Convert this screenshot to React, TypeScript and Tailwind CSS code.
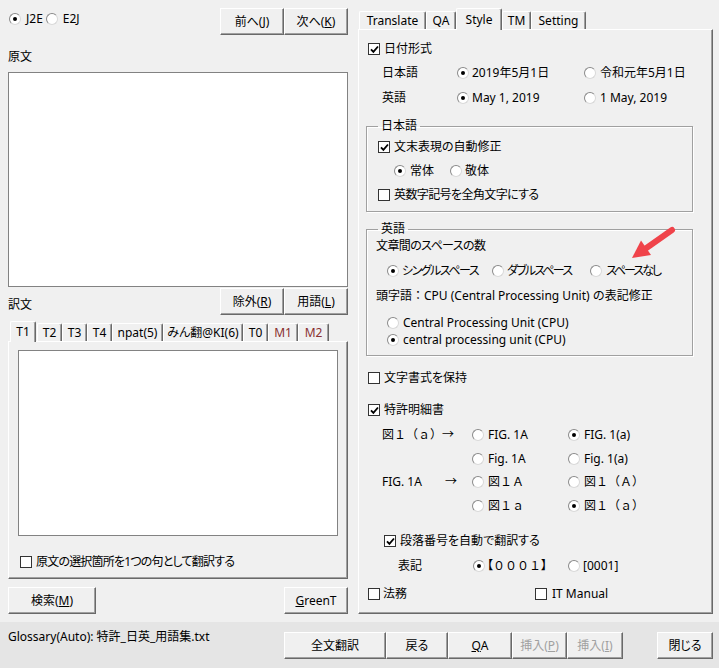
import React from "react";

const btnBase =
    "flex items-center justify-center h-[27px] bg-[#f0f0f0] border border-t-white border-l-white border-r-[#696969] border-b-[#696969] shadow-[inset_-1px_-1px_0_#a0a0a0] leading-none shrink-0";

const Button: React.FC<{className: string; disabled?: boolean; children: React.ReactNode}> = ({className, disabled, children}) => (
    <div className={`${btnBase} ${disabled ? "text-[#a0a0a0]" : ""} ${className}`}>{children}</div>
);

const CheckBox: React.FC<{checked?: boolean; className?: string}> = ({checked, className = ""}) => (
    <span className={`flex items-center justify-center w-[12px] h-[12px] shrink-0 bg-white border border-[#333333] ${className}`}>
        {checked && (
            <svg width="9" height="9" viewBox="0 0 9 9">
                <path d="M1 4.3 L3.4 6.9 L8 1.5" fill="none" stroke="#000" strokeWidth="1.8"/>
            </svg>
        )}
    </span>
);

const Radio: React.FC<{checked?: boolean; className?: string}> = ({checked, className = ""}) => (
    <span className={`flex items-center justify-center w-[12px] h-[12px] shrink-0 rounded-full bg-white border border-t-[#8a8a8a] border-l-[#8a8a8a] border-r-[#d8d8d8] border-b-[#d8d8d8] ${className}`}>
        {checked && <span className="w-[4px] h-[4px] rounded-full bg-black"/>}
    </span>
);

const Row: React.FC<{className?: string; children: React.ReactNode}> = ({className = "", children}) => (
    <div className={`flex items-center h-[18px] whitespace-nowrap ${className}`}>{children}</div>
);

const Tab: React.FC<{className: string; active?: boolean; children: React.ReactNode}> = ({className, active, children}) => (
    <div
        className={`flex items-center justify-center bg-[#f0f0f0] border-t border-l border-r border-t-white border-l-white border-r-[#696969] shadow-[inset_-1px_0_0_#a0a0a0] rounded-t-[2px] whitespace-nowrap ${active ? "relative z-10" : "mb-px"} ${className}`}
    >
        {children}
    </div>
);

const panelBorder =
    "bg-[#f0f0f0] border border-t-white border-l-white border-r-[#696969] border-b-[#696969] shadow-[inset_-1px_-1px_0_#a0a0a0]";

const groupBox = "m-0 p-0 border border-[#a0a0a0] shadow-[1px_1px_0_#fff,inset_1px_1px_0_#fff]";

const LeftPane = () => (
    <div className="flex flex-col w-[358px] pl-[8px] pr-[10px] shrink-0">
        {/* direction + prev/next */}
        <div className="flex justify-between h-[27px] mt-[8px]">
            <div className="flex items-center h-[18px] mt-[2px] pl-[1px]">
                <Radio checked/>
                <span className="ml-[5px]">J2E</span>
                <Radio className="ml-[3px]"/>
                <span className="ml-[5px]">E2J</span>
            </div>
            <div className="flex">
                <Button className="w-[64px]">前へ(<u>J</u>)</Button>
                <Button className="w-[64px]">次へ(<u>K</u>)</Button>
            </div>
        </div>

        <Row className="mt-[13px]">原文</Row>
        <div className="mt-[6px] h-[215px] w-[340px] bg-white border border-[#828282]"/>

        <div className="flex justify-between h-[27px] mt-[1px]">
            <Row className="self-end mb-[1px]">訳文</Row>
            <div className="flex">
                <Button className="w-[64px]">除外(<u>R</u>)</Button>
                <Button className="w-[64px]">用語(<u>L</u>)</Button>
            </div>
        </div>

        {/* result tabs */}
        <div className="flex items-end h-[21px] mt-[6px] pl-[2px]">
            <Tab active className="w-[26px] h-[21px]">T1</Tab>
            <Tab className="w-[25px] h-[18px] ml-px">T2</Tab>
            <Tab className="w-[25px] h-[18px]">T3</Tab>
            <Tab className="w-[25px] h-[18px]">T4</Tab>
            <Tab className="w-[51px] h-[18px]">npat(5)</Tab>
            <Tab className="w-[80px] h-[18px]">みん翻@KI(6)</Tab>
            <Tab className="w-[25px] h-[18px]">T0</Tab>
            <Tab className="w-[30px] h-[18px] text-[#8a3030]">M1</Tab>
            <Tab className="w-[31px] h-[18px] text-[#8a3030]">M2</Tab>
        </div>
        <div className={`-mt-px h-[238px] w-[340px] pl-[9px] ${panelBorder}`}>
            <div className="mt-[8px] h-[186px] w-[320px] bg-white border border-[#828282]"/>
            <Row className="mt-[17px] pl-[2px]">
                <CheckBox/>
                <span className="ml-[4px] tracking-[-0.8px]">原文の選択箇所を1つの句として翻訳する</span>
            </Row>
        </div>

        <div className="flex justify-between mt-[8px]">
            <Button className="w-[88px]">検索(<u>M</u>)</Button>
            <Button className="w-[64px]"><u>G</u>reenT</Button>
        </div>
    </div>
);

const RightPane = () => (
    <div className="flex flex-col w-[355px] shrink-0">
        <div className="flex items-end h-[22px] mt-[8px] pl-[1px]">
            <Tab className="w-[67px] h-[18px]">Translate</Tab>
            <Tab className="w-[30px] h-[18px]">QA</Tab>
            <Tab active className="w-[46px] h-[22px]">Style</Tab>
            <Tab className="w-[29px] h-[18px]">TM</Tab>
            <Tab className="w-[55px] h-[18px]">Setting</Tab>
        </div>
        <div className={`-mt-px h-[585px] w-[355px] ${panelBorder}`}>
            {/* date format */}
            <Row className="mt-[10px] pl-[9px]">
                <CheckBox checked/>
                <span className="ml-[4px]">日付形式</span>
            </Row>
            <Row className="mt-[6px] pl-[23px]">
                <span className="w-[75px]">日本語</span>
                <Radio checked/>
                <span className="ml-[3px] w-[112px]">2019年5月1日</span>
                <Radio/>
                <span className="ml-[4px]">令和元年5月1日</span>
            </Row>
            <Row className="mt-[7px] pl-[23px]">
                <span className="w-[75px]">英語</span>
                <Radio checked/>
                <span className="ml-[3px] w-[112px]">May 1, 2019</span>
                <Radio/>
                <span className="ml-[4px]">1 May, 2019</span>
            </Row>

            {/* Japanese group */}
            <fieldset className={`mt-[11px] ml-[7px] w-[327px] pb-[7px] ${groupBox}`}>
                <legend className="ml-[11px] px-[3px] leading-[16px]">日本語</legend>
                <Row className="mt-[4px] pl-[11px]">
                    <CheckBox checked/>
                    <span className="ml-[4px]">文末表現の自動修正</span>
                </Row>
                <Row className="mt-[6px] pl-[27px]">
                    <Radio checked/>
                    <span className="ml-[4px] w-[24px]">常体</span>
                    <Radio className="ml-[16px]"/>
                    <span className="ml-[3px]">敬体</span>
                </Row>
                <Row className="mt-[6px] pl-[11px]">
                    <CheckBox/>
                    <span className="ml-[4px] tracking-[-0.6px]">英数字記号を全角文字にする</span>
                </Row>
            </fieldset>

            {/* English group */}
            <fieldset className={`mt-[9px] ml-[7px] w-[327px] pb-[6px] ${groupBox}`}>
                <legend className="ml-[11px] px-[3px] leading-[16px]">英語</legend>
                <Row className="pl-[9px] tracking-[-0.6px]">文章間のスペースの数</Row>
                <Row className="mt-[7px] pl-[20px]">
                    <Radio checked/>
                    <span className="ml-[3px] w-[90px] tracking-[-1.5px]">シングルスペース</span>
                    <Radio/>
                    <span className="ml-[3px] w-[83px] tracking-[-1.8px]">ダブルスペース</span>
                    <Radio/>
                    <span className="ml-[4px] tracking-[-2px]">スペースなし</span>
                </Row>
                <Row className="mt-[7px] pl-[9px] [font-feature-settings:normal]">
                    頭字語：CPU (Central Processing Unit) の表記修正
                </Row>
                <div className="flex items-start h-[17px] mt-[9px] pl-[20px] whitespace-nowrap">
                    <Radio className="mt-[3px]"/>
                    <span className="ml-[4px] h-[16px] leading-[18px] overflow-hidden">Central Processing Unit (CPU)</span>
                </div>
                <Row className="pl-[20px]">
                    <Radio checked/>
                    <span className="ml-[4px]">central processing unit (CPU)</span>
                </Row>
            </fieldset>

            <Row className="mt-[13px] pl-[9px]">
                <CheckBox/>
                <span className="ml-[4px]">文字書式を保持</span>
            </Row>

            {/* patent */}
            <Row className="mt-[14px] pl-[9px]">
                <CheckBox checked/>
                <span className="ml-[4px]">特許明細書</span>
            </Row>
            <Row className="mt-[7px] pl-[23px] [font-feature-settings:normal]">
                <span className="w-[90px]">図１（ａ）→</span>
                <Radio/>
                <span className="ml-[4px] w-[80px]">FIG. 1A</span>
                <Radio checked/>
                <span className="ml-[4px]">FIG. 1(a)</span>
            </Row>
            <Row className="mt-[6px] pl-[113px]">
                <Radio/>
                <span className="ml-[4px] w-[80px]">Fig. 1A</span>
                <Radio/>
                <span className="ml-[4px]">Fig. 1(a)</span>
            </Row>
            <Row className="mt-[5px] pl-[23px] [font-feature-settings:normal]">
                <span className="w-[63px]">FIG. 1A</span>
                <span className="w-[27px]">→</span>
                <Radio/>
                <span className="ml-[4px] w-[80px]">図１Ａ</span>
                <Radio/>
                <span className="ml-[4px]">図１（Ａ）</span>
            </Row>
            <Row className="mt-[6px] pl-[113px] [font-feature-settings:normal]">
                <Radio/>
                <span className="ml-[4px] w-[80px]">図１ａ</span>
                <Radio checked/>
                <span className="ml-[4px]">図１（ａ）</span>
            </Row>

            <Row className="mt-[17px] pl-[25px]">
                <CheckBox checked/>
                <span className="ml-[4px]">段落番号を自動で翻訳する</span>
            </Row>
            <Row className="mt-[7px] pl-[39px]">
                <span className="w-[75px]">表記</span>
                <Radio checked/>
                <span className="ml-[2px] w-[81px] flex">
                    <span>【</span>
                    <span className="[font-feature-settings:normal]">０００１</span>
                    <span>】</span>
                </span>
                <Radio/>
                <span className="ml-[3px]">[0001]</span>
            </Row>

            <Row className="mt-[10px] pl-[9px]">
                <CheckBox/>
                <span className="ml-[3px] w-[152px]">法務</span>
                <CheckBox/>
                <span className="ml-[5px]">IT Manual</span>
            </Row>
        </div>
    </div>
);

const BottomBar = () => (
    <div className="flex h-[46px] bg-[#e5e5e5] whitespace-nowrap">
        <div className="w-[284px] pl-[8px] mt-[6px] h-[18px] flex items-center shrink-0">
            Glossary(Auto): 特許_日英_用語集.txt
        </div>
        <div className="flex mt-[10px]">
            <Button className="w-[102px]">全文翻訳</Button>
            <Button className="w-[62px]">戻る</Button>
            <Button className="w-[64px]"><u>Q</u>A</Button>
            <Button disabled className="w-[55px]">挿入(<u>P</u>)</Button>
            <Button disabled className="w-[56px]">挿入(<u>I</u>)</Button>
            <Button className="w-[56px] ml-[34px]">閉じる</Button>
        </div>
    </div>
);

export default function App() {
    return (
        <div className="relative w-[719px] h-[668px] overflow-hidden bg-[#f0f0f0] text-black text-[12px] leading-[18px] font-['Noto_Sans','Noto_Sans_CJK_JP',sans-serif] [font-feature-settings:'palt']">
            <div className="flex h-[622px]">
                <LeftPane/>
                <RightPane/>
            </div>
            <BottomBar/>

            {/* red annotation arrow */}
            <svg className="absolute left-[624px] top-[221px]" width="54" height="42" viewBox="0 0 54 42">
                <line x1="48" y1="9" x2="21" y2="28" stroke="#f0434a" strokeWidth="6" strokeLinecap="round"/>
                <polygon points="8,37 27,34 17,19.5" fill="#f0434a"/>
            </svg>
        </div>
    );
}
